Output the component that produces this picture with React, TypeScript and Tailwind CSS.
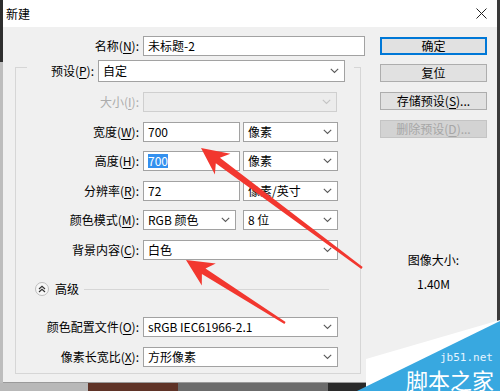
import React from 'react'

const cjk = "font-['Noto_Sans_CJK_SC','Microsoft_YaHei',sans-serif]"

function Chevron({ color = '#5a5a5a' }: { color?: string }) {
  return (
    <svg width="9" height="6" viewBox="0 0 9 6" className="shrink-0">
      <polyline points="0.8,0.8 4.5,4.5 8.2,0.8" fill="none" stroke={color} strokeWidth="1.1" />
    </svg>
  )
}

function Label({ children, className = '' }: { children: React.ReactNode; className?: string }) {
  return <div className={`text-right leading-[16px] whitespace-nowrap ${className}`}>{children}</div>
}

function Mn({ c }: { c: string }) {
  // mnemonic letter, underlined like a Windows dialog
  return <u className="underline-offset-[2px] decoration-[1px]">{c}</u>
}

function Input({ className = '', children }: { className?: string; children?: React.ReactNode }) {
  return (
    <div className={`h-[20px] border border-[#a2a2a2] bg-white flex items-center pl-[4px] leading-[16px] ${className}`}>
      {children}
    </div>
  )
}

function Select({ className = '', children, disabled }: { className?: string; children?: React.ReactNode; disabled?: boolean }) {
  return (
    <div
      className={`h-[20px] border flex items-center justify-between pl-[4px] pr-[5px] leading-[16px] ${
        disabled ? 'border-[#cfcfcf] bg-[#ececec]' : 'border-[#a2a2a2] bg-white'
      } ${className}`}
    >
      <span className="whitespace-nowrap">{children}</span>
      <Chevron color={disabled ? '#c4c4c4' : '#5a5a5a'} />
    </div>
  )
}

function Button({ children, primary, disabled }: { children: React.ReactNode; primary?: boolean; disabled?: boolean }) {
  const tone = disabled
    ? 'bg-[#d3d3d3] border-[#c4c4c4] text-[#a6a6a6]'
    : primary
    ? 'bg-[#e1e1e1] border-[#0078d7] shadow-[inset_0_0_0_1px_#0078d7] text-black'
    : 'bg-[#e1e1e1] border-[#adadad] text-black'
  return (
    <div className={`h-[18px] w-[107px] border flex items-center justify-center leading-[16px] ${tone}`}>{children}</div>
  )
}

function arrowPoints(tx: number, ty: number, ex: number, ey: number) {
  const dx = ex - tx
  const dy = ey - ty
  const len = Math.hypot(dx, dy)
  const ux = dx / len
  const uy = dy / len
  const px = -uy
  const py = ux
  const headLen = 27
  const headW = 13
  const notch = 21
  const w0 = 3.4
  const w1 = 1.1
  const pts = [
    [tx, ty],
    [tx + headLen * ux + headW * px, ty + headLen * uy + headW * py],
    [tx + notch * ux + w0 * px, ty + notch * uy + w0 * py],
    [ex + w1 * px, ey + w1 * py],
    [ex - w1 * px, ey - w1 * py],
    [tx + notch * ux - w0 * px, ty + notch * uy - w0 * py],
    [tx + headLen * ux - headW * px, ty + headLen * uy - headW * py],
  ]
  return pts.map(p => `${p[0].toFixed(1)},${p[1].toFixed(1)}`).join(' ')
}

export default function App() {
  return (
    <div className={`w-[500px] h-[391px] relative overflow-hidden bg-[#f0f0f0] text-[12px] text-black ${cjk}`}>
      <div className="flex h-[383px]">
        {/* window edge */}
        <div className="w-[3px] flex flex-col">
          <div className="h-[62px] bg-[#2e2e2e]" />
          <div className="flex-1 bg-[#bdbdbd]" />
        </div>

        <div className="flex-1 flex flex-col border-b border-[#9a9a9a]">
          {/* Title bar */}
          <div className="h-[27px] bg-white flex items-center justify-between pl-[3px] pr-[10px] shrink-0">
            <span className="leading-[16px]">新建</span>
            <svg width="11" height="11" viewBox="0 0 11 11">
              <path d="M0.5 0.5 L10.5 10.5 M10.5 0.5 L0.5 10.5" stroke="#222" strokeWidth="1" />
            </svg>
          </div>

          {/* Body */}
          <div className="flex-1 flex">
            {/* Left column */}
            <div className="w-[362px] shrink-0 flex flex-col">
              <div className="flex items-center mt-[9px]">
                <Label className="w-[136px]">名称(<Mn c="N" />):</Label>
                <Input className="ml-[4px] w-[222px]">未标题-2</Input>
              </div>

              {/* Group box */}
              <div className="mt-[11px] ml-[12px] w-[346px] h-[307px] border border-[#d6d6d6] flex flex-col">
                <div className="-mt-[8px] ml-[11px] mr-[6px] h-[22px] bg-[#f0f0f0] flex items-center">
                  <Label className="w-[67px]">预设(<Mn c="P" />):</Label>
                  <Select className="ml-[4px] w-[247px] !h-[22px]">自定</Select>
                </div>

                <div className="flex items-center mt-[10px]">
                  <Label className="w-[123px] text-[#acacac]">大小(<Mn c="I" />):</Label>
                  <Select disabled className="ml-[4px] w-[194px]" />
                </div>

                <div className="flex items-center mt-[10px]">
                  <Label className="w-[123px]">宽度(<Mn c="W" />):</Label>
                  <Input className="ml-[4px] w-[97px]">700</Input>
                  <Select className="ml-[3px] w-[95px]">像素</Select>
                </div>

                <div className="flex items-center mt-[9px]">
                  <Label className="w-[123px]">高度(<Mn c="H" />):</Label>
                  <Input className="ml-[4px] w-[97px]">
                    <span className="bg-[#3390ef] text-white leading-[14px]">700</span>
                  </Input>
                  <Select className="ml-[3px] w-[95px]">像素</Select>
                </div>

                <div className="flex items-center mt-[10px]">
                  <Label className="w-[123px]">分辨率(<Mn c="R" />):</Label>
                  <Input className="ml-[4px] w-[97px]">72</Input>
                  <Select className="ml-[3px] w-[95px]">像素/英寸</Select>
                </div>

                <div className="flex items-center mt-[9px]">
                  <Label className="w-[123px]">颜色模式(<Mn c="M" />):</Label>
                  <Select className="ml-[4px] w-[93px]">RGB 颜色</Select>
                  <Select className="ml-[7px] w-[95px]">8 位</Select>
                </div>

                <div className="flex items-center mt-[10px]">
                  <Label className="w-[123px]">背景内容(<Mn c="C" />):</Label>
                  <Select className="ml-[4px] w-[195px]">白色</Select>
                </div>

                {/* Advanced */}
                <div className="flex items-center mt-[22px] h-[14px]">
                  <div className="ml-[19px] w-[14px] h-[14px] rounded-full border border-[#bdbdbd] bg-[#f7f7f7] flex items-center justify-center">
                    <svg width="8" height="8" viewBox="0 0 8 8">
                      <polyline points="1,4 4,1.3 7,4" fill="none" stroke="#333" strokeWidth="1.2" />
                      <polyline points="1,7 4,4.3 7,7" fill="none" stroke="#333" strokeWidth="1.2" />
                    </svg>
                  </div>
                  <span className="ml-[6px] leading-[16px]">高级</span>
                  <div className="flex-1 ml-[5px] mr-[31px] h-px bg-[#d6d6d6]" />
                </div>

                <div className="flex items-center mt-[21px]">
                  <Label className="w-[123px]">颜色配置文件(<Mn c="O" />):</Label>
                  <Select className="ml-[4px] w-[195px]">sRGB IEC61966-2.1</Select>
                </div>

                <div className="flex items-center mt-[10px]">
                  <Label className="w-[123px]">像素长宽比(<Mn c="X" />):</Label>
                  <Select className="ml-[4px] w-[195px]">方形像素</Select>
                </div>
              </div>
            </div>

            {/* Right column */}
            <div className="flex-1 flex flex-col pl-[15px] pt-[10px]">
              <Button primary>确定</Button>
              <div className="mt-[9px]"><Button>复位</Button></div>
              <div className="mt-[10px]"><Button>存储预设(<Mn c="S" />)...</Button></div>
              <div className="mt-[10px]"><Button disabled>删除预设(<Mn c="D" />)...</Button></div>
              <div className="w-[107px] mt-[114px] flex flex-col items-center leading-[16px]">
                <span>图像大小:</span>
                <span className="mt-[8px]">1.40M</span>
              </div>
            </div>
          </div>
        </div>

        <div className="w-[3px] bg-[#3a3a3a]" />
      </div>

      {/* background behind the dialog */}
      <div className="flex h-[8px]">
        <div className="w-[88px] bg-[#b8b8b8]" />
        <div className="w-[90px] bg-[#5f3327]" />
        <div className="w-[150px] bg-[#6b6b6b]" />
        <div className="flex-1 bg-[#2a2a2a]" />
      </div>

      {/* annotations + watermark */}
      <svg className="absolute inset-0 pointer-events-none" width="500" height="391" viewBox="0 0 500 391">
        <polygon points={arrowPoints(201, 148, 362, 268)} fill="#f2372f" />
        <polygon points={arrowPoints(186, 260, 285, 323)} fill="#f2372f" />
        <polygon points="366,359 500,320 500,391 366,391" fill="#ffffff" />
        <polygon points="357,391 500,321 500,391" fill="#38a8e0" />
      </svg>
      <span className="absolute left-[440px] top-[352px] text-[11px] leading-[12px] text-[#e6f4ff] font-['DejaVu_Sans_Mono',monospace]">
        jb51.net
      </span>
      <span className="absolute left-[406px] top-[368px] text-[22px] leading-[22px] whitespace-nowrap text-white">脚本之家</span>
    </div>
  )
}
